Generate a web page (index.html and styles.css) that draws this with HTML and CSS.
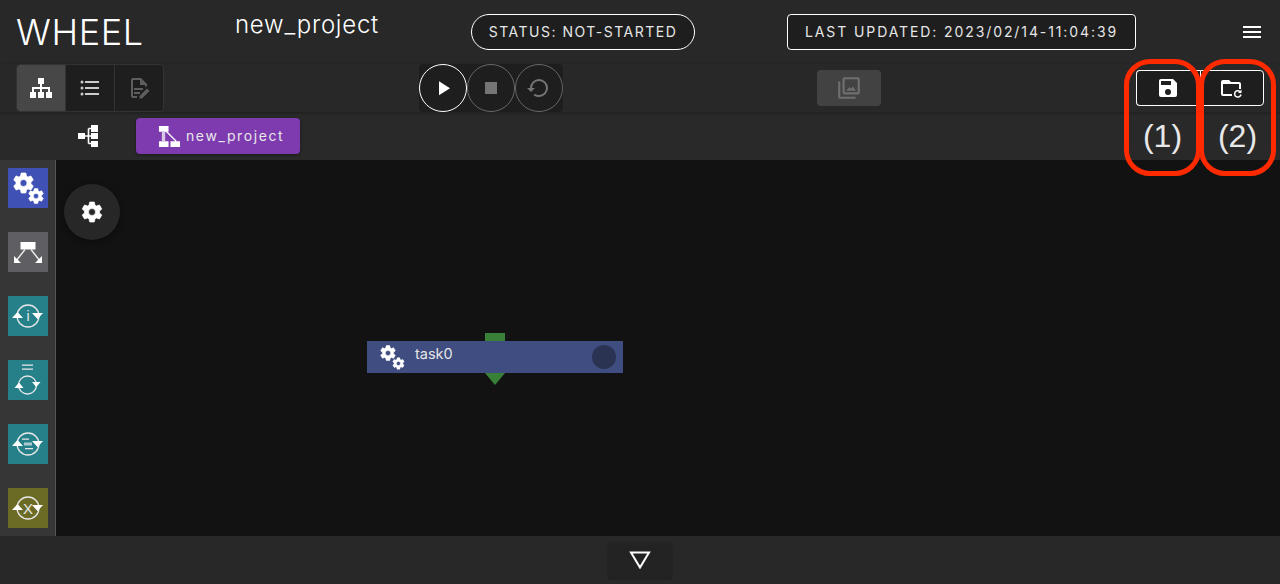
FILE: index.html
```html
<!DOCTYPE html>
<html>
<head>
<title>WHEEL</title>
<link rel="stylesheet" href="styles.css">
</head>
<body>
<svg class="defs" width="0" height="0">
  <defs>
    <path id="cog" fill-rule="evenodd" d="M12,15.5A3.5,3.5 0 0,1 8.5,12A3.5,3.5 0 0,1 12,8.5A3.5,3.5 0 0,1 15.5,12A3.5,3.5 0 0,1 12,15.5M19.43,12.97C19.47,12.65 19.5,12.33 19.5,12C19.5,11.67 19.47,11.34 19.43,11L21.54,9.37C21.73,9.22 21.78,8.95 21.66,8.73L19.66,5.27C19.54,5.05 19.27,4.96 19.05,5.05L16.56,6.05C16.04,5.66 15.5,5.32 14.87,5.07L14.5,2.42C14.46,2.18 14.25,2 14,2H10C9.75,2 9.54,2.18 9.5,2.42L9.13,5.07C8.5,5.32 7.96,5.66 7.44,6.05L4.95,5.05C4.73,4.96 4.46,5.05 4.34,5.27L2.34,8.73C2.21,8.95 2.27,9.22 2.46,9.37L4.57,11C4.53,11.34 4.5,11.67 4.5,12C4.5,12.33 4.53,12.65 4.57,12.97L2.46,14.63C2.27,14.78 2.21,15.05 2.34,15.27L4.34,18.73C4.46,18.95 4.73,19.03 4.95,18.95L7.44,17.94C7.96,18.34 8.5,18.68 9.13,18.93L9.5,21.58C9.54,21.82 9.75,22 10,22H14C14.25,22 14.46,21.82 14.5,21.58L14.87,18.93C15.5,18.67 16.04,18.34 16.56,17.94L19.05,18.95C19.27,19.03 19.54,18.95 19.66,18.73L21.66,15.27C21.78,15.05 21.73,14.78 21.54,14.63L19.43,12.97Z"/>
    <g id="loop">
      <circle cx="20" cy="20" r="11" fill="none" stroke="#e8e8e8" stroke-width="1.300"/>
      <path fill="#fff" d="M4 22l5.500-6 5.500 6zM24 17h11l-5.500 6z"/>
    </g>
  </defs>
</svg>

<div class="top-bar">
  <div class="logo">WHEEL</div>
  <div class="project-name">new_project</div>
  <div class="status">STATUS: NOT-STARTED</div>
  <div class="updated">LAST UPDATED: 2023/02/14-11:04:39</div>
  <svg class="menu-icon" viewBox="0 0 24 24"><path d="M3,6H21V8H3V6M3,11H21V13H3V11M3,16H21V18H3V16Z"/></svg>
</div>

<div class="tool-bar">
  <div class="view-group">
    <div class="view-btn active">
      <svg viewBox="0 0 24 24"><path d="M9,2V8H11V11H3V16H1V22H7V16H5V13H11V16H9V22H15V16H13V13H19V16H17V22H23V16H21V11H13V8H15V2H9Z"/></svg>
    </div>
    <div class="view-btn">
      <svg viewBox="0 0 24 24"><path fill="#ccc" d="M7,5H21V7H7V5M7,13V11H21V13H7M4,4.5A1.5,1.5 0 0,1 5.5,6A1.5,1.5 0 0,1 4,7.5A1.5,1.5 0 0,1 2.5,6A1.5,1.5 0 0,1 4,4.5M4,10.5A1.5,1.5 0 0,1 5.5,12A1.5,1.5 0 0,1 4,13.5A1.5,1.5 0 0,1 2.5,12A1.5,1.5 0 0,1 4,10.5M7,19V17H21V19H7M4,16.5A1.5,1.5 0 0,1 5.5,18A1.5,1.5 0 0,1 4,19.5A1.5,1.5 0 0,1 2.5,18A1.5,1.5 0 0,1 4,16.5Z"/></svg>
    </div>
    <div class="view-btn">
      <svg viewBox="0 0 24 24"><path fill="#5e5e5e" d="M6 2h8l6 6v2.500h-2V9h-5V4H6v16h4v2H6a2 2 0 0 1-2-2V4a2 2 0 0 1 2-2zM7 12h9v2H7zM7 16h6v2H7zM20 12.500l2.500 2.500-7.500 7.500h-2.500V20z"/></svg>
    </div>
  </div>

  <div class="run-group">
    <div class="run-btn enabled"><svg viewBox="0 0 24 24"><path fill="#fff" d="M8,5.14V19.14L19,12.14L8,5.14Z"/></svg></div>
    <div class="run-btn"><svg viewBox="0 0 24 24"><path fill="#757575" d="M18,18H6V6H18V18Z"/></svg></div>
    <div class="run-btn"><svg viewBox="0 0 24 24"><path fill="#757575" d="M12,3A9,9 0 0,0 3,12H0L4,16L8,12H5A7,7 0 0,1 12,5A7,7 0 0,1 19,12A7,7 0 0,1 12,19C10.5,19 9.09,18.5 7.94,17.7L6.5,19.14C8.04,20.3 9.94,21 12,21A9,9 0 0,0 21,12A9,9 0 0,0 12,3Z"/></svg></div>
  </div>

  <div class="graph-btn">
    <svg viewBox="0 0 24 24"><path fill="#6f6f6f" d="M22,16V4A2,2 0 0,0 20,2H8A2,2 0 0,0 6,4V16A2,2 0 0,0 8,18H20A2,2 0 0,0 22,16M8,16V4H20V16H8M2,6V20A2,2 0 0,0 4,22H18V20H4V6H2M9.500 14.500l3-3.500 1.500 1.800 1.500-2.300 3 4z"/></svg>
  </div>

  <div class="file-group">
    <div class="file-btn">
      <svg viewBox="0 0 24 24"><path fill="#fff" d="M15,9H5V5H15M12,19A3,3 0 0,1 9,16A3,3 0 0,1 12,13A3,3 0 0,1 15,16A3,3 0 0,1 12,19M17,3H5C3.89,3 3,3.9 3,5V19A2,2 0 0,0 5,21H19A2,2 0 0,0 21,19V7L17,3Z"/></svg>
    </div>
    <div class="file-btn">
      <svg viewBox="0 0 24 24"><path fill="#fff" d="M4 4h6l2 2h8a2 2 0 0 1 2 2v5h-2V8H4v10h9v2H4a2 2 0 0 1-2-2V6a2 2 0 0 1 2-2z"/><path fill="none" stroke="#fff" stroke-width="1.500" d="M22 18.500a3.200 3.200 0 1 1-1-3"/><path fill="#fff" d="M22.500 13.500v3.500H19z"/></svg>
    </div>
  </div>
</div>

<div class="crumb-bar">
  <svg class="tree-icon" viewBox="0 0 20 22">
    <path fill="#fff" d="M0 8h7v6H0zM13 0h7v7h-7zM13 8h7v6h-7zM13 16h7v6h-7z"/>
    <path fill="none" stroke="#fff" stroke-width="1.600" d="M7 11h6M10.500 3.500v15M10.500 3.500H13M10.500 18.500H13"/>
  </svg>
  <div class="crumb">
    <svg viewBox="0 0 24 24">
      <path fill="#fff" d="M1 1h10v6H1zM1 17h10v6H1zM13 17h10v6H13z"/>
      <path fill="#d9c8e6" d="M4 7h3.500v10H4z"/>
      <path fill="none" stroke="#fff" stroke-width="1.300" d="M7 5l12 12"/>
    </svg>
    <span>new_project</span>
  </div>
</div>

<div class="main">
  <div class="side">
    <svg class="tool task-tool" viewBox="0 0 40 40">
      <use class="gear" href="#cog" transform="translate(3.500 3)"/>
      <use class="gear" href="#cog" transform="translate(19 19) scale(.75)"/>
    </svg>
    <svg class="tool if-tool" viewBox="0 0 40 40">
      <path fill="#fff" d="M12.500 10h15v7.500h-15z"/>
      <path fill="none" stroke="#e8e8e8" stroke-width="1.500" d="M17 17.500L8 29M23 17.500L32 29"/>
      <path fill="#fff" d="M6 31v-7l7 7zM34 31v-7l-7 7z"/>
    </svg>
    <svg class="tool loop-tool" viewBox="0 0 40 40">
      <use href="#loop"/>
      <text class="tool-text" x="20" y="25" text-anchor="middle">i</text>
    </svg>
    <svg class="tool loop-tool" viewBox="0 0 40 40">
      <path fill="#e8e8e8" d="M14 4.500h11v1.300H14zM14 8.500h11v1.300H14z"/>
      <circle cx="19.500" cy="25" r="9" fill="none" stroke="#e8e8e8" stroke-width="1.300"/>
      <path fill="#fff" d="M6.500 28l4.500-5.500 4.500 5.500zM24 22h8.500l-4.200 5z"/>
    </svg>
    <svg class="tool loop-tool" viewBox="0 0 40 40">
      <use href="#loop"/>
      <path fill="#e8e8e8" d="M14 14.500h7v1.200h-7zM17 24h8v1.200h-8z"/>
      <path fill="#a9c9cc" d="M16 18.500h8v3h-8z"/>
    </svg>
    <svg class="tool x-tool" viewBox="0 0 40 40">
      <use href="#loop"/>
      <text class="tool-text big" x="20" y="25.500" text-anchor="middle">X</text>
    </svg>
  </div>

  <div class="canvas">
    <div class="fab">
      <svg viewBox="0 0 24 24"><use class="gear" href="#cog"/></svg>
    </div>
    <div class="node">
      <div class="node-in"></div>
      <div class="node-body">
        <svg class="node-icon" viewBox="0 0 26 26">
          <use class="gear" href="#cog" transform="scale(.75)"/>
          <use class="gear" href="#cog" transform="translate(12.500 12.500) scale(.58)"/>
        </svg>
        <span class="node-name">task0</span>
        <div class="node-state"></div>
      </div>
      <div class="node-out"></div>
    </div>
  </div>
</div>

<div class="bottom-bar">
  <div class="log-btn">
    <svg viewBox="0 0 22 18"><path fill="none" stroke="#fff" stroke-width="2" d="M2 1.500h18L11 16.500z"/></svg>
  </div>
</div>

<div class="mark mark-1">(1)</div>
<div class="mark mark-2">(2)</div>
</body>
</html>
```

FILE: styles.css
```css
html, body {
    margin: 0;
    padding: 0;
    height: 100%;
    overflow: hidden;
}
body {
    display: flex;
    flex-direction: column;
    position: relative;
    background-color: #282828;
    color: #fff;
    font-family: Inter, "Liberation Sans", sans-serif;
}
.defs {
    position: absolute;
}
.gear {
    fill: #fff;
    stroke: #fff;
    stroke-width: .7;
}

/* top row */
.top-bar {
    height: 64px;
    flex: none;
    display: flex;
    align-items: center;
    padding: 0 16px;
    box-sizing: border-box;
}
.logo {
    width: 219px;
    font-size: 36px;
    font-weight: 300;
    letter-spacing: .6px;
    line-height: 64px;
    flex: none;
}
.project-name {
    width: 236px;
    flex: none;
    font-size: 24px;
    font-weight: 300;
    letter-spacing: .75px;
    line-height: 50px;
    align-self: flex-start;
}
.status, .updated {
    height: 36px;
    line-height: 34px;
    box-sizing: border-box;
    border: 1px solid #fff;
    background-color: #1e1e1e;
    font-size: 14px;
    letter-spacing: 1.5px;
    color: #e6e6e6;
    text-align: center;
    flex: none;
}
.status {
    width: 224px;
    border-radius: 18px;
    margin-right: 92px;
}
.updated {
    width: 349px;
    border-radius: 4px;
    margin-right: 104px;
    letter-spacing: 1.9px;
}
.menu-icon {
    width: 24px;
    height: 24px;
    fill: #fff;
    flex: none;
}

/* tool row */
.tool-bar {
    height: 48px;
    flex: none;
    display: flex;
    padding-left: 16px;
    position: relative;
    box-shadow: 0 1px 3px rgba(0, 0, 0, .3);
}
.view-group {
    display: flex;
    width: 148px;
    box-sizing: border-box;
    border: 1px solid #333;
    border-radius: 4px;
    background-color: #1e1e1e;
    overflow: hidden;
}
.view-btn {
    flex: 1;
    display: flex;
    align-items: center;
    justify-content: center;
    border-left: 1px solid #333;
}
.view-btn:first-child {
    border-left: 0;
}
.view-btn.active {
    background-color: #474747;
}
.view-btn svg {
    width: 24px;
    height: 24px;
    fill: #fff;
}
.run-group {
    display: flex;
    margin-left: 255px;
    width: 144px;
    height: 48px;
    background-color: #1e1e1e;
    border-radius: 4px;
}
.run-btn {
    width: 48px;
    height: 48px;
    box-sizing: border-box;
    border: 1px solid #666;
    border-radius: 50%;
    display: flex;
    align-items: center;
    justify-content: center;
}
.run-btn.enabled {
    border-color: #fff;
}
.run-btn svg {
    width: 24px;
    height: 24px;
}
.graph-btn {
    margin: 6px 0 0 254px;
    width: 64px;
    height: 36px;
    border-radius: 4px;
    background-color: #424242;
    display: flex;
    align-items: center;
    justify-content: center;
}
.graph-btn svg {
    width: 26px;
    height: 26px;
}
.file-group {
    display: flex;
    margin: 6px 0 0 255px;
}
.file-btn {
    width: 64px;
    height: 36px;
    box-sizing: border-box;
    border: 1px solid #fff;
    background-color: #1e1e1e;
    display: flex;
    align-items: center;
    justify-content: center;
}
.file-btn:first-child {
    border-radius: 4px 0 0 4px;
    border-right: 0;
}
.file-btn:last-child {
    border-radius: 0 4px 4px 0;
}
.file-btn svg {
    width: 24px;
    height: 24px;
    margin-left: -2px;
}

/* breadcrumb row */
.crumb-bar {
    height: 48px;
    flex: none;
    display: flex;
    align-items: center;
    background-color: #292929;
    padding-left: 78px;
}
.tree-icon {
    width: 20px;
    height: 22px;
    margin-right: 38px;
}
.crumb {
    width: 164px;
    height: 36px;
    box-sizing: border-box;
    padding-left: 22px;
    border-radius: 4px;
    background-color: #7e3bb0;
    display: flex;
    align-items: center;
    font-size: 14px;
    line-height: 34px;
    letter-spacing: 1.6px;
    color: #e8e8e8;
    box-shadow: 0 1px 3px rgba(0, 0, 0, .4);
}
.crumb svg {
    width: 23px;
    height: 23px;
    margin-right: 5px;
}

/* main */
.main {
    flex: 1;
    display: flex;
    min-height: 0;
}
.side {
    width: 56px;
    flex: none;
    box-sizing: border-box;
    border-right: 1px solid #555;
    background-color: #363636;
    padding: 8px 0 0 8px;
    display: flex;
    flex-direction: column;
    gap: 24px;
}
.tool {
    width: 40px;
    height: 40px;
    display: block;
}
.task-tool {
    background-color: #3f51b5;
}
.if-tool {
    background-color: #5f5f63;
}
.loop-tool {
    background-color: #26808a;
}
.x-tool {
    background-color: #6b6b25;
}
.tool-text {
    font-family: "Liberation Sans", sans-serif;
    font-size: 14px;
    fill: #e8e8e8;
}
.tool-text.big {
    font-size: 15px;
}
.canvas {
    flex: 1;
    position: relative;
    background-color: #121212;
}
.fab {
    position: absolute;
    left: 8px;
    top: 24px;
    width: 56px;
    height: 56px;
    border-radius: 50%;
    background-color: #272727;
    box-shadow: 0 2px 6px rgba(0, 0, 0, .4);
    display: flex;
    align-items: center;
    justify-content: center;
}
.fab svg {
    width: 24px;
    height: 24px;
}

/* workflow node */
.node {
    position: absolute;
    left: 311px;
    top: 173px;
    width: 256px;
}
.node-in {
    width: 20px;
    height: 8px;
    margin-left: 118px;
    background-color: #388038;
}
.node-body {
    height: 32px;
    background-color: #3f4d80;
    display: flex;
    align-items: center;
    padding-left: 12px;
    position: relative;
}
.node-icon {
    width: 26px;
    height: 26px;
    margin-right: 10px;
}
.node-name {
    font-size: 14.5px;
    color: #e6e6e6;
    position: relative;
    top: -4px;
}
.node-state {
    width: 24px;
    height: 24px;
    border-radius: 50%;
    background-color: #2a3352;
    margin-left: auto;
    margin-right: 7px;
}
.node-out {
    width: 0;
    height: 0;
    margin-left: 118px;
    border-left: 10px solid transparent;
    border-right: 10px solid transparent;
    border-top: 12px solid #388038;
}

/* bottom */
.bottom-bar {
    height: 48px;
    flex: none;
    display: flex;
    justify-content: center;
    padding-top: 6px;
    box-sizing: border-box;
}
.log-btn {
    width: 64px;
    height: 36px;
    border-radius: 4px;
    background-color: #232323;
    box-shadow: 0 1px 2px rgba(0, 0, 0, .3);
    display: flex;
    align-items: center;
    justify-content: center;
}
.log-btn svg {
    width: 22px;
    height: 18px;
}

/* red callouts over the screenshot */
.mark {
    position: absolute;
    top: 59px;
    height: 117px;
    box-sizing: border-box;
    border: 5px solid #ff2a00;
    border-radius: 26px;
    font-family: "Liberation Sans", sans-serif;
    font-size: 32px;
    color: #e8e8e8;
    text-align: center;
    padding-top: 52px;
    line-height: 40px;
}
.mark-1 {
    left: 1124px;
    width: 77px;
}
.mark-2 {
    left: 1199px;
    width: 77px;
}
```
